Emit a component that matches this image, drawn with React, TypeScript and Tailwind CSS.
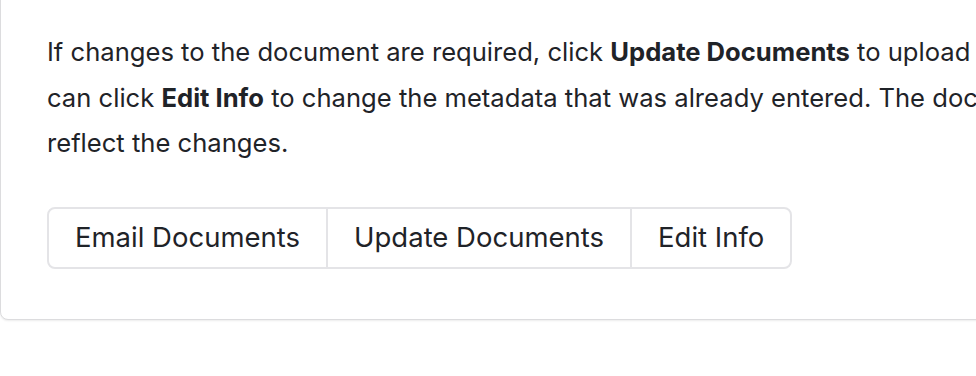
export default function App() {
    const buttons = ["Email Documents", "Update Documents", "Edit Info"];

    return (
        <div className="h-[376px] w-[976px] overflow-hidden bg-white font-['Inter',sans-serif] text-[#1f2328]">
            {/* Card, wider than the window and cut off at top and right */}
            <div className="-mt-[12px] w-[1200px] rounded-[8px] border border-[#dcdcde] bg-white pl-[46px] pt-[40px] pb-[50px] shadow-[0_1px_2px_rgba(0,0,0,0.08)]">
                <p className="whitespace-nowrap text-[25.6px] leading-[45.5px]">
                    If changes to the document are required, click <b className="font-bold">Update Documents</b> to upload a new version, or you
                    <br />
                    can click <b className="font-bold">Edit Info</b> to change the metadata that was already entered. The document will update to
                    <br />
                    reflect the changes.
                </p>

                {/* Button group */}
                <div className="mt-[41px] inline-flex rounded-[8px] border-2 border-[#e4e4e7]">
                    {buttons.map((label, i) => (
                        <button
                            key={label}
                            className={
                                "h-[58px] px-[26px] text-[27.5px] leading-none text-[#1f2328] " +
                                (i > 0 ? "border-l-2 border-[#e4e4e7]" : "")
                            }
                        >
                            {label}
                        </button>
                    ))}
                </div>
            </div>
        </div>
    );
}
